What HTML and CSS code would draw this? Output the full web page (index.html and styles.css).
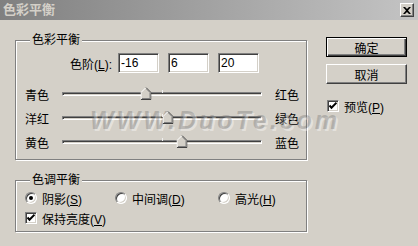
FILE: index.html
```html
<!DOCTYPE html>
<html lang="zh-CN">

<head>
    <meta charset="UTF-8">
    <meta name="viewport" content="width=device-width, initial-scale=1.0">
    <title>色彩平衡</title>
    <link rel="stylesheet" href="styles.css">
</head>

<body>
    <div class="window">
        <div class="titlebar">
            <span class="title">色彩平衡</span>
            <button class="close-btn">
                <svg width="8" height="7" viewBox="0 0 8 7">
                    <path d="M0 0h2l2 2 2-2h2L5 3.5 8 7H6L4 5 2 7H0l3-3.5z" fill="#000" />
                </svg>
            </button>
        </div>

        <div class="client">
            <div class="left-col">
                <fieldset class="group balance">
                    <legend>色彩平衡</legend>
                    <div class="levels-row">
                        <label class="levels-label">色阶(<u>L</u>):</label>
                        <input class="field" type="text" value="-16">
                        <input class="field" type="text" value="6">
                        <input class="field" type="text" value="20">
                    </div>

                    <div class="slider-row">
                        <span class="side-label">青色</span>
                        <div class="track">
                            <span class="thumb" style="left: 42%">
                                <svg width="11" height="13" viewBox="0 0 11 13">
                                    <path d="M0.5 12.5V5.5L5.5 0.5 10.5 5.5V12.5Z" fill="#d4d0c8" />
                                    <path d="M0.5 12V5.5L5.5 0.5" stroke="#fff" fill="none" />
                                    <path d="M5.5 0.5L10.5 5.5V12.5H0.5" stroke="#404040" fill="none" />
                                    <path d="M6 2L9.5 5.5V11.5H1.5" stroke="#808080" fill="none" />
                                </svg>
                            </span>
                        </div>
                        <span class="side-label end">红色</span>
                    </div>
                    <div class="slider-row">
                        <span class="side-label">洋红</span>
                        <div class="track">
                            <span class="thumb" style="left: 53%">
                                <svg width="11" height="13" viewBox="0 0 11 13">
                                    <path d="M0.5 12.5V5.5L5.5 0.5 10.5 5.5V12.5Z" fill="#d4d0c8" />
                                    <path d="M0.5 12V5.5L5.5 0.5" stroke="#fff" fill="none" />
                                    <path d="M5.5 0.5L10.5 5.5V12.5H0.5" stroke="#404040" fill="none" />
                                    <path d="M6 2L9.5 5.5V11.5H1.5" stroke="#808080" fill="none" />
                                </svg>
                            </span>
                        </div>
                        <span class="side-label end">绿色</span>
                    </div>
                    <div class="slider-row">
                        <span class="side-label">黄色</span>
                        <div class="track">
                            <span class="thumb" style="left: 60%">
                                <svg width="11" height="13" viewBox="0 0 11 13">
                                    <path d="M0.5 12.5V5.5L5.5 0.5 10.5 5.5V12.5Z" fill="#d4d0c8" />
                                    <path d="M0.5 12V5.5L5.5 0.5" stroke="#fff" fill="none" />
                                    <path d="M5.5 0.5L10.5 5.5V12.5H0.5" stroke="#404040" fill="none" />
                                    <path d="M6 2L9.5 5.5V11.5H1.5" stroke="#808080" fill="none" />
                                </svg>
                            </span>
                        </div>
                        <span class="side-label end">蓝色</span>
                    </div>
                </fieldset>

                <fieldset class="group tone">
                    <legend>色调平衡</legend>
                    <div class="radio-row">
                        <label class="option"><span class="radio checked"></span><span>阴影(<u>S</u>)</span></label>
                        <label class="option"><span class="radio"></span><span>中间调(<u>D</u>)</span></label>
                        <label class="option"><span class="radio"></span><span>高光(<u>H</u>)</span></label>
                    </div>
                    <label class="option">
                        <span class="checkbox">
                            <svg width="8" height="8" viewBox="0 0 8 8">
                                <path d="M0.5 3.5l2 2.2 5-5" stroke="#000" stroke-width="2" fill="none" />
                            </svg>
                        </span>
                        <span>保持亮度(<u>V</u>)</span>
                    </label>
                </fieldset>
            </div>

            <div class="right-col">
                <button class="btn default">确定</button>
                <button class="btn">取消</button>
                <label class="option preview">
                    <span class="checkbox">
                        <svg width="8" height="8" viewBox="0 0 8 8">
                            <path d="M0.5 3.5l2 2.2 5-5" stroke="#000" stroke-width="2" fill="none" />
                        </svg>
                    </span>
                    <span>预览(<u>P</u>)</span>
                </label>
            </div>
        </div>

        <!-- watermark from the source screenshot -->
        <div class="watermark">WWW.DuoTe.com</div>
    </div>
</body>

</html>
```

FILE: styles.css
```css
* {
    box-sizing: border-box;
}

body {
    margin: 0;
    background: #d4d0c8;
    font-family: "Liberation Sans", "Noto Sans CJK SC", sans-serif;
    font-size: 12px;
    color: #000;
}

.window {
    position: relative;
    width: 418px;
    height: 246px;
    background: #d4d0c8;
    overflow: hidden;
}

.titlebar {
    height: 20px;
    display: flex;
    align-items: center;
    justify-content: space-between;
    padding: 0 4px 0 3px;
    background: linear-gradient(to right, #808080, #c4c4c4);
}

.title {
    color: #d4d0c8;
    font-weight: bold;
    font-size: 13px;
    line-height: 16px;
}

.close-btn {
    width: 14px;
    height: 14px;
    padding: 0;
    display: flex;
    align-items: center;
    justify-content: center;
    background: #d4d0c8;
    border: 1px solid;
    border-color: #fff #404040 #404040 #fff;
    box-shadow: inset -1px -1px 0 #808080;
}

.client {
    display: flex;
    gap: 19px;
    padding-left: 15px;
}

.left-col {
    width: 292px;
}

.group {
    margin: 13px 0 0;
    padding: 6px 9px 5px;
    border: 1px solid #808080;
    box-shadow: inset 1px 1px 0 #fff, 1px 1px 0 #fff;
    min-width: 0;
}

.group legend {
    margin-left: 5px;
    padding: 0 2px;
    line-height: 14px;
    background: #d4d0c8;
}

.levels-row {
    display: flex;
    align-items: center;
    gap: 9px;
    height: 20px;
    margin-bottom: 9px;
}

.levels-label {
    width: 87px;
    margin-right: -3px;
    text-align: right;
}

.field {
    width: 41px;
    height: 20px;
    padding: 0 2px;
    font: inherit;
    background: #fff;
    border: 1px solid;
    border-color: #808080 #fff #fff #808080;
    box-shadow: inset 1px 1px 0 #404040, inset -1px -1px 0 #d4d0c8;
    outline: none;
}

.slider-row {
    display: flex;
    align-items: center;
    height: 24px;
}

.side-label {
    flex: none;
    width: 37px;
    white-space: nowrap;
}

.side-label.end {
    width: auto;
    margin-left: 13px;
}

.track {
    position: relative;
    flex: none;
    width: 200px;
    height: 4px;
    background: #d4d0c8;
    border: 1px solid;
    border-color: #808080 #fff #fff #808080;
    box-shadow: inset 1px 1px 0 #404040;
}

.track::after {
    content: "";
    position: absolute;
    left: 50%;
    top: -3px;
    width: 1px;
    height: 3px;
    background: #f0f0f0;
}

.thumb {
    position: absolute;
    top: -6px;
    width: 11px;
    height: 13px;
    transform: translateX(-50%);
    z-index: 1;
}

.thumb svg {
    display: block;
}

.group.tone {
    padding-top: 3px;
}

.radio-row {
    display: grid;
    grid-template-columns: 90px 103px auto;
    margin-bottom: 4px;
}

.option {
    display: flex;
    align-items: center;
    gap: 5px;
    height: 16px;
    white-space: nowrap;
}

.radio {
    position: relative;
    flex: none;
    width: 12px;
    height: 12px;
    border-radius: 50%;
    background: #fff;
    border: 1px solid;
    border-color: #808080 #fff #fff #808080;
    box-shadow: inset 1px 1px 0 #404040, inset -1px -1px 0 #d4d0c8;
}

.radio.checked::after {
    content: "";
    position: absolute;
    left: 3px;
    top: 3px;
    width: 4px;
    height: 4px;
    border-radius: 50%;
    background: #000;
}

.checkbox {
    display: flex;
    flex: none;
    align-items: center;
    justify-content: center;
    width: 12px;
    height: 12px;
    background: #fff;
    border: 1px solid;
    border-color: #808080 #fff #fff #808080;
    box-shadow: inset 1px 1px 0 #404040, inset -1px -1px 0 #d4d0c8;
}

.checkbox svg {
    display: block;
}

.right-col {
    display: flex;
    flex-direction: column;
    width: 81px;
    padding-top: 17px;
}

.btn {
    height: 20px;
    padding: 0;
    font: inherit;
    background: #d4d0c8;
    border: 1px solid;
    border-color: #fff #404040 #404040 #fff;
    box-shadow: inset -1px -1px 0 #808080;
}

.btn + .btn {
    margin-top: 7px;
}

.btn.default {
    border: 1px solid #000;
    box-shadow: inset 1px 1px 0 #fff, inset -1px -1px 0 #404040, inset -2px -2px 0 #808080;
}

.preview {
    margin-top: 14px;
    padding-left: 1px;
}

.watermark {
    position: absolute;
    left: 90px;
    top: 106px;
    font-size: 25px;
    font-weight: bold;
    font-style: italic;
    letter-spacing: 3px;
    color: rgba(110, 110, 110, 0.35);
    text-shadow: 2px 2px 0 rgba(255, 255, 255, 0.4);
    pointer-events: none;
}
```
